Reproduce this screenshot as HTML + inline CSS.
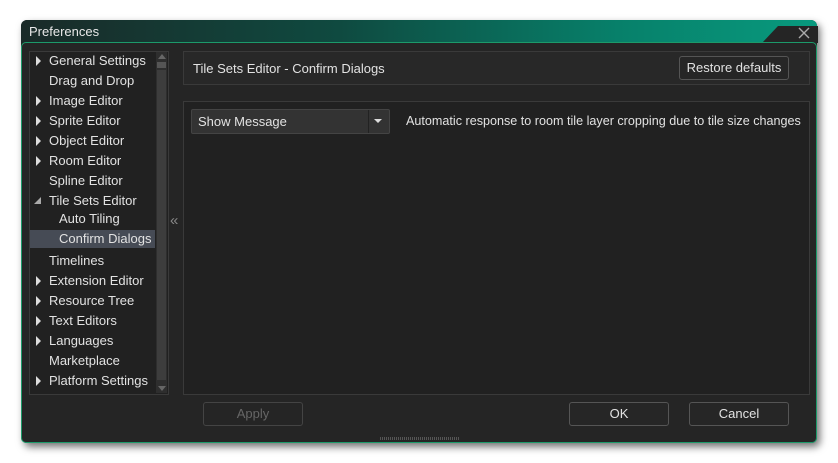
<!DOCTYPE html>
<html><head><style>
body{margin:0;width:838px;height:463px;background:#fff;position:relative;font-family:"Liberation Sans",sans-serif;font-size:13px;color:#e2e2e2;overflow:hidden}
.abs{position:absolute}
.win{left:21px;top:20px;width:796px;height:423px;border-radius:6px;box-shadow:3px 4px 8px rgba(0,0,0,.55);background:#252525}
.title{left:21px;top:20px;width:796px;height:23px;border-radius:6px 6px 0 0;background:linear-gradient(90deg,#1a2a28 0%,#0f4a40 40%,#07806a 75%,#089a7e 100%)}
.body{left:21px;top:42px;width:794px;height:399px;border:1px solid #1c9a6a;border-radius:5px;background:#252525}
.panel{background:#212121;border:1px solid #3a3a3a}
.item{position:absolute;left:49px;height:20px;line-height:20px;white-space:nowrap}
.tri{position:absolute;left:36px;width:0;height:0;border-left:5px solid #ddd;border-top:5px solid transparent;border-bottom:5px solid transparent}
.btn{position:absolute;border:1px solid #555;border-radius:3px;background:#262626;text-align:center;line-height:22px;height:22px}
</style></head><body>
<div class="abs win"></div>
<div class="abs title"></div>
<div class="abs" style="left:762px;top:26px;width:56px;height:17px;background:#252525;clip-path:polygon(16px 0,100% 0,100% 100%,0 100%)"></div>
<div class="abs" style="left:29px;top:24px;color:#e8e8e8;font-size:13px">Preferences</div>
<svg class="abs" style="left:798px;top:27px" width="12" height="12"><path d="M1 1L11 11M11 1L1 11" stroke="#aaa" stroke-width="1.4"/></svg>
<div class="abs body"></div>
<div class="abs panel" style="left:29px;top:51px;width:138px;height:342px"></div>
<div class="abs" style="left:156px;top:52px;width:11px;height:341px;background:#2e2e2e"></div>
<div class="abs" style="left:157px;top:62px;width:9px;height:6px;background:#555"></div>
<div class="abs" style="left:157px;top:70px;width:9px;height:310px;background:#3d3d3d"></div>
<div class="abs" style="left:158px;top:54px;width:0;height:0;border-left:4px solid transparent;border-right:4px solid transparent;border-bottom:5px solid #666"></div>
<div class="abs" style="left:158px;top:386px;width:0;height:0;border-left:4px solid transparent;border-right:4px solid transparent;border-top:5px solid #666"></div>
<div class="abs" style="left:30px;top:230px;width:125px;height:18px;background:#464b55"></div>
<div class="tri" style="top:56px"></div><div class="item" style="top:51px">General Settings</div>
<div class="item" style="top:71px">Drag and Drop</div>
<div class="tri" style="top:96px"></div><div class="item" style="top:91px">Image Editor</div>
<div class="tri" style="top:116px"></div><div class="item" style="top:111px">Sprite Editor</div>
<div class="tri" style="top:136px"></div><div class="item" style="top:131px">Object Editor</div>
<div class="tri" style="top:156px"></div><div class="item" style="top:151px">Room Editor</div>
<div class="item" style="top:171px">Spline Editor</div>
<div class="abs" style="left:34px;top:197px;width:0;height:0;border-left:7px solid transparent;border-bottom:7px solid #aaa"></div>
<div class="item" style="top:191px">Tile Sets Editor</div>
<div class="item" style="top:209px;left:59px">Auto Tiling</div>
<div class="item" style="top:229px;left:59px">Confirm Dialogs</div>
<div class="item" style="top:251px">Timelines</div>
<div class="tri" style="top:276px"></div><div class="item" style="top:271px">Extension Editor</div>
<div class="tri" style="top:296px"></div><div class="item" style="top:291px">Resource Tree</div>
<div class="tri" style="top:316px"></div><div class="item" style="top:311px">Text Editors</div>
<div class="tri" style="top:336px"></div><div class="item" style="top:331px">Languages</div>
<div class="item" style="top:351px">Marketplace</div>
<div class="tri" style="top:376px"></div><div class="item" style="top:371px">Platform Settings</div>
<div class="abs" style="left:170px;top:212px;color:#888;font-size:15px">«</div>
<div class="abs panel" style="left:183px;top:51px;width:625px;height:32px;background:#282828"></div>
<div class="abs" style="left:193px;top:61px">Tile Sets Editor - Confirm Dialogs</div>
<div class="btn" style="left:679px;top:56px;width:108px">Restore defaults</div>
<div class="abs panel" style="left:183px;top:101px;width:625px;height:292px"></div>
<div class="abs" style="left:191px;top:109px;width:197px;height:23px;border:1px solid #444;border-radius:2px;background:#333"></div>
<div class="abs" style="left:368px;top:110px;width:1px;height:23px;background:#222"></div>
<div class="abs" style="left:374px;top:119px;width:0;height:0;border-left:4px solid transparent;border-right:4px solid transparent;border-top:4px solid #ddd"></div>
<div class="abs" style="left:198px;top:114px">Show Message</div>
<div class="abs" style="left:406px;top:114px;font-size:12.6px">Automatic response to room tile layer cropping due to tile size changes</div>
<div class="btn" style="left:203px;top:402px;width:98px;color:#666;border-color:#444;background:#252525">Apply</div>
<div class="btn" style="left:569px;top:402px;width:98px">OK</div>
<div class="btn" style="left:689px;top:402px;width:98px">Cancel</div>
<div class="abs" style="left:380px;top:437px;width:80px;height:3px;background:repeating-linear-gradient(90deg,#555 0 1px,transparent 1px 2px)"></div>
</body></html>
